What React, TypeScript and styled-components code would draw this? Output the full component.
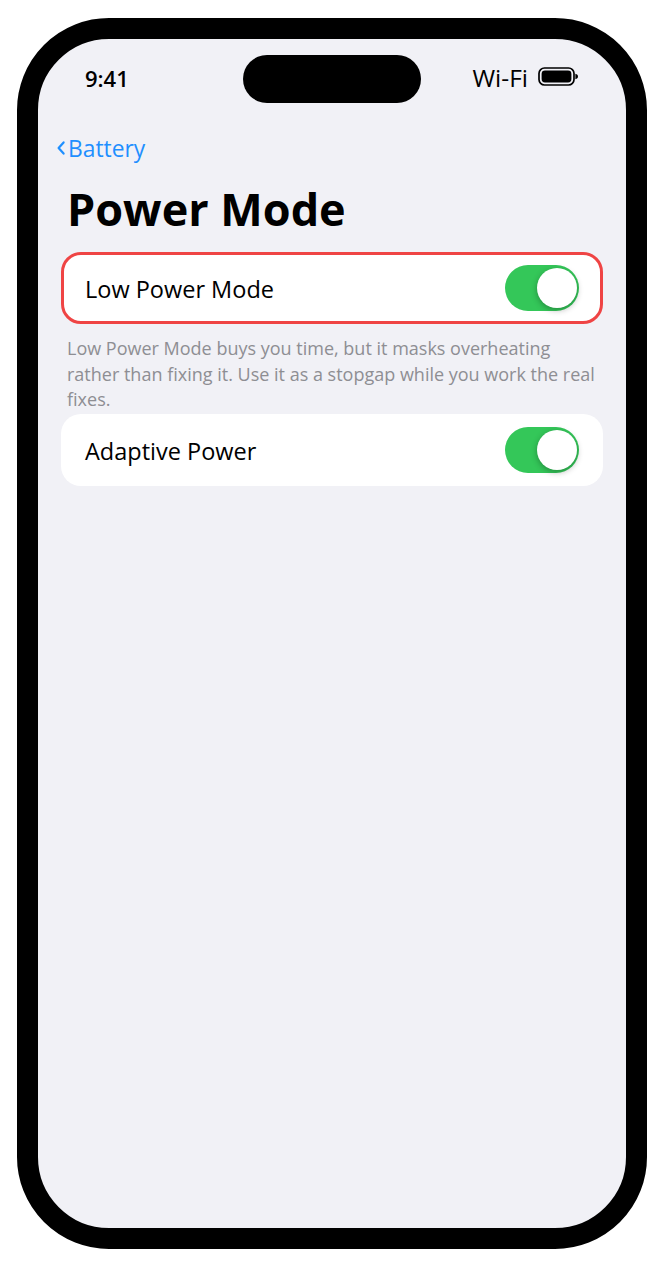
import React from 'react';
import styled, { createGlobalStyle } from 'styled-components';

const GlobalStyle = createGlobalStyle`
  html, body {
    margin: 0;
    padding: 0;
    background: #fff;
  }
  * {
    box-sizing: border-box;
  }
`;

function App() {
  return (
    <>
      <GlobalStyle />
      <Page>
        <Phone>
          <Island />
          <StatusBar>
            <Time>9:41</Time>
            <StatusRight>
              <span>Wi-Fi</span>
              <BatteryIcon />
            </StatusRight>
          </StatusBar>
          <BackLink>
            <svg width="10" height="18" viewBox="0 0 10 18" fill="none">
              <path d="M7.6 3.4 2.6 9l5 5.6" stroke="#1f8fff" strokeWidth="2.2" strokeLinecap="round" strokeLinejoin="round" />
            </svg>
            <span>Battery</span>
          </BackLink>
          <Title>Power Mode</Title>
          <Row $highlighted>
            <RowLabel>Low Power Mode</RowLabel>
            <Toggle />
          </Row>
          <Note>
            Low Power Mode buys you time, but it masks overheating rather than fixing it. Use it as a stopgap while you
            work the real fixes.
          </Note>
          <Row>
            <RowLabel>Adaptive Power</RowLabel>
            <Toggle />
          </Row>
        </Phone>
      </Page>
    </>
  );
}

function BatteryIcon() {
  return (
    <svg width="41" height="19" viewBox="0 0 41 19" fill="none">
      <rect x="1" y="1" width="35" height="17" rx="5.5" stroke="#000" strokeWidth="1.7" />
      <rect x="3.6" y="3.6" width="29.8" height="11.8" rx="3.4" fill="#000" />
      <path d="M37.4 6.8c1.6.4 2.6 1.4 2.6 2.7s-1 2.3-2.6 2.7z" fill="#000" />
    </svg>
  );
}

function Toggle() {
  return (
    <Track>
      <Knob />
    </Track>
  );
}

export default App;

const Page = styled.div`
  width: 665px;
  height: 1267px;
  padding: 18px 18px 18px 17px;
  font-family: 'Open Sans', 'Noto Sans', sans-serif;
  overflow: hidden;
`;
const Phone = styled.div`
  position: relative;
  width: 630px;
  height: 1231px;
  border: 21px solid #000;
  border-radius: 92px;
  background: #f1f1f6;
  padding: 0 23px;
`;
const Island = styled.div`
  position: absolute;
  top: 16px;
  left: 205px;
  width: 178px;
  height: 48px;
  border-radius: 24px;
  background: #000;
`;
const StatusBar = styled.div`
  height: 78px;
  padding: 0 24px;
  display: flex;
  justify-content: space-between;
  align-items: center;
  color: #000;
`;
const Time = styled.span`
  font-size: 22px;
  font-weight: 550;
  line-height: 1;
`;
const StatusRight = styled.div`
  display: flex;
  align-items: center;
  gap: 10px;
  font-size: 24.5px;
  line-height: 1;
  > svg {
    margin-top: -3px;
  }
`;
const BackLink = styled.div`
  display: flex;
  align-items: center;
  gap: 2px;
  height: 30px;
  margin: 16px 0 0 -5px;
  color: #1f8fff;
  font-size: 22.8px;
`;
const Title = styled.h1`
  margin: 19px 0 16px 6px;
  height: 54px;
  color: #000;
  font-size: 45px;
  line-height: 54px;
  font-weight: 700;
`;
const Row = styled.div<{ $highlighted?: boolean }>`
  height: 72px;
  padding: 0 24px;
  display: flex;
  justify-content: space-between;
  align-items: center;
  background: #fff;
  border-radius: 20px;
  border: 3px solid ${(p) => (p.$highlighted ? '#ef4444' : 'transparent')};
`;
const RowLabel = styled.span`
  margin: 2px 0 0 -3px;
  color: #000;
  font-size: 23.5px;
`;
const Track = styled.div`
  position: relative;
  margin-right: -3px;
  width: 74px;
  height: 46px;
  border-radius: 23px;
  background: #34c759;
  flex-shrink: 0;
`;
const Knob = styled.div`
  position: absolute;
  top: 3px;
  right: 2px;
  width: 40px;
  height: 40px;
  border-radius: 50%;
  background: #fff;
  box-shadow: 0 2px 6px rgba(0, 0, 0, 0.3);
`;
const Note = styled.p`
  margin: 12px 6px 2px 6px;
  height: 76px;
  color: #8e8e93;
  font-size: 18px;
  line-height: 25.5px;
`;
